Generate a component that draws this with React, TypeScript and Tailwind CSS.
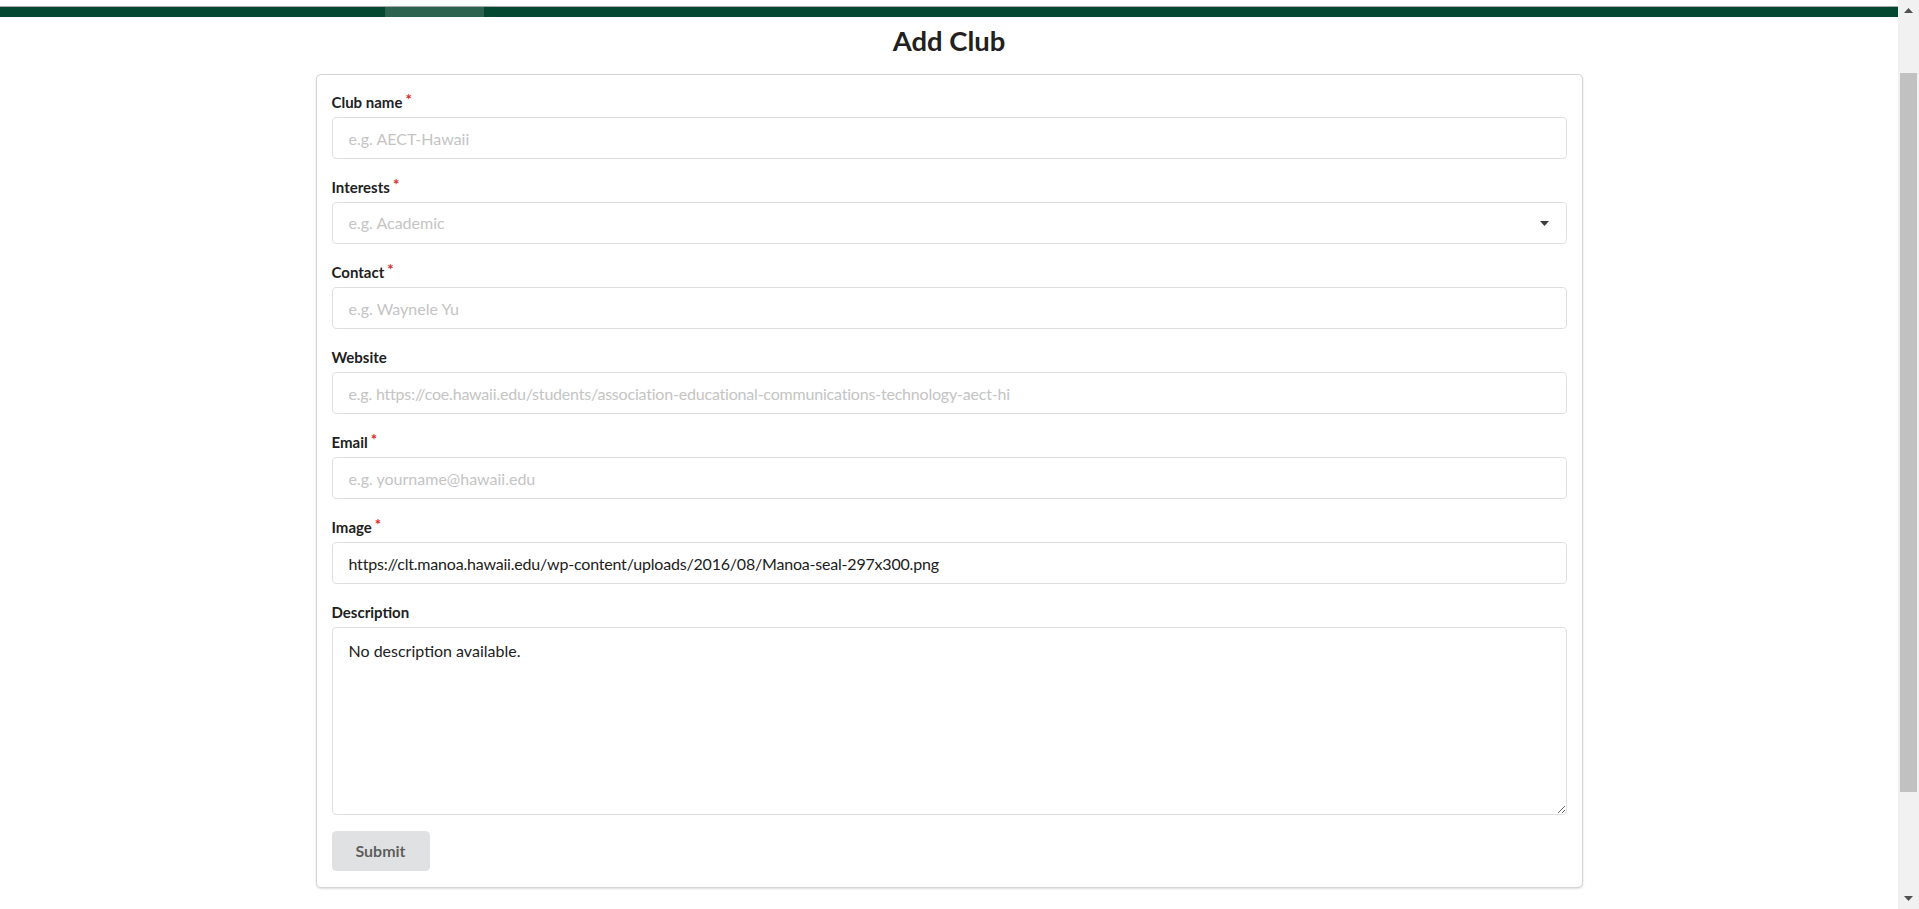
import { useLayoutEffect } from "react";

type Field = {
  label: string;
  required?: boolean;
  placeholder?: string;
  value?: string;
  kind?: "input" | "select";
  tight?: boolean;
};

const fields: Field[] = [
  { label: "Club name", required: true, placeholder: "e.g. AECT-Hawaii" },
  { label: "Interests", required: true, placeholder: "e.g. Academic", kind: "select" },
  { label: "Contact", required: true, placeholder: "e.g. Waynele Yu" },
  {
    label: "Website",
    placeholder:
      "e.g. https://coe.hawaii.edu/students/association-educational-communications-technology-aect-hi",
    tight: true,
  },
  { label: "Email", required: true, placeholder: "e.g. yourname@hawaii.edu" },
  {
    label: "Image",
    required: true,
    value: "https://clt.manoa.hawaii.edu/wp-content/uploads/2016/08/Manoa-seal-297x300.png",
    tight: true,
  },
];

function Label({ text, required }: { text: string; required?: boolean }) {
  return (
    <label className="mb-[4px] block h-[22px] text-[15px] font-bold leading-[22px] text-[#212121]">
      {text}
      {required && (
        <span className="ml-[3px] -mt-[3px] inline-block align-top text-[#db2828]">*</span>
      )}
    </label>
  );
}

// window scrollbar as it shows in the screenshot
function ScrollBar() {
  return (
    <div aria-hidden className="fixed right-0 top-0 flex h-screen w-[21px] flex-col bg-[#f1f1f1]">
      <div className="flex h-[21px] items-center justify-center">
        <svg width="9" height="5" viewBox="0 0 9 5">
          <path d="M0 5h9L4.5 0z" fill="#505050" />
        </svg>
      </div>
      <div className="flex-1 px-[2px]">
        <div className="mt-[52px] h-[719px] bg-[#c1c1c1]" />
      </div>
      <div className="flex h-[21px] items-center justify-center">
        <svg width="9" height="5" viewBox="0 0 9 5">
          <path d="M0 0h9L4.5 5z" fill="#505050" />
        </svg>
      </div>
    </div>
  );
}

export default function App() {
  // the page is viewed scrolled a little past the top menu
  useLayoutEffect(() => {
    window.scrollTo(0, 70);
  }, []);

  return (
    <div className="min-h-[1106px] bg-white font-['Lato',sans-serif] text-[#212121]">
      <div className="mr-[21px]">
        {/* top menu (scrolled out of view) */}
        <header className="h-[77px] border-b border-[#a9a9a9] bg-white" />
        <div className="flex h-[10px] bg-[#044832]">
          <div className="w-[385px]" />
          <div className="w-[99px] bg-[#2b6250]" />
        </div>

        <div className="flex justify-center pb-[148px]">
          <div className="w-[1267px]">
            <h2 className="mt-[6px] h-[35px] text-center text-[27.4px] font-bold leading-[35px] text-[#212121]">
              Add Club
            </h2>

            <form className="mt-[16px] rounded-[5px] border border-[#d4d4d5] bg-white px-[15px] py-[16px] shadow-[0_1px_2px_0_rgba(34,36,38,0.15)]">
              {fields.map((f) => (
                <div key={f.label} className="mb-[17px]">
                  <Label text={f.label} required={f.required} />
                  {f.kind === "select" ? (
                    <div className="flex h-[42px] w-full items-center justify-between rounded-[4.57px] border border-[#dededf] pl-[16px] pr-[17px] text-[16px] text-[#c4c4c4]">
                      <span>{f.placeholder}</span>
                      <svg width="9" height="5" viewBox="0 0 9 5" className="text-[#3d3d3d]">
                        <path d="M0 0h9L4.5 5z" fill="currentColor" />
                      </svg>
                    </div>
                  ) : (
                    <input
                      type="text"
                      defaultValue={f.value}
                      placeholder={f.placeholder}
                      className={
                        f.tight
                          ? "block h-[42px] w-full rounded-[4.57px] border border-[#dededf] px-[16px] text-[16px] leading-[19.4px] tracking-[-0.2px] text-[#212121] outline-none placeholder:text-[#c4c4c4]"
                          : "block h-[42px] w-full rounded-[4.57px] border border-[#dededf] px-[16px] text-[16px] leading-[19.4px] text-[#212121] outline-none placeholder:text-[#c4c4c4]"
                      }
                    />
                  )}
                </div>
              ))}

              <div className="mb-[16px]">
                <Label text="Description" />
                <textarea
                  defaultValue="No description available."
                  className="block h-[188px] w-full resize-y rounded-[4.57px] border border-[#dededf] px-[16px] py-[12.57px] text-[16px] leading-[20.57px] text-[#212121] outline-none"
                />
              </div>

              <button
                type="button"
                className="h-[40px] w-[98px] rounded-[4.57px] bg-[#e0e1e2] text-[16px] font-bold text-[rgba(0,0,0,0.6)]"
              >
                Submit
              </button>
            </form>
          </div>
        </div>
      </div>
      <ScrollBar />
    </div>
  );
}
